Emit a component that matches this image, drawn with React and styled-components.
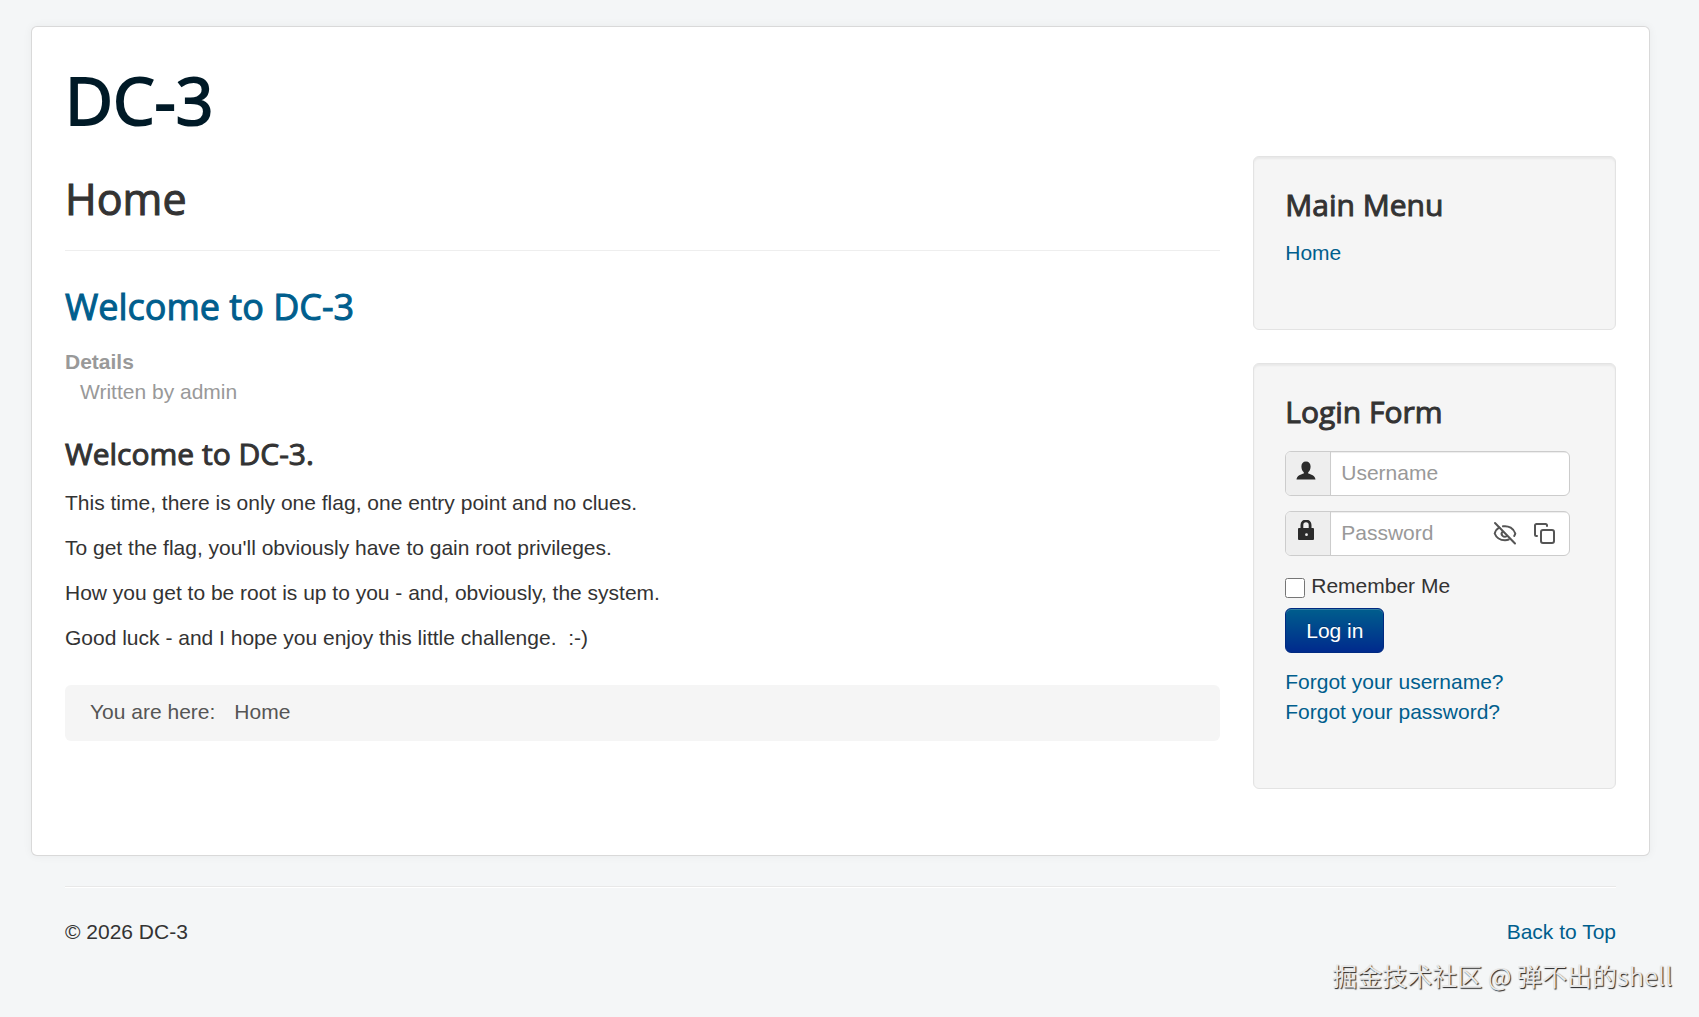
import React from 'react'
import styled, { createGlobalStyle } from 'styled-components';

const GlobalStyle = createGlobalStyle`
* {
box-sizing: border-box;
}
body {
margin: 0;
background: #f4f6f7;
color: #333;
font-family: "Liberation Sans", Arial, sans-serif;
font-size: 21px;
line-height: 30px;
}
`

const Page = styled.div`
padding: 26px 49px 0 31px;
`

const Card = styled.div`
background: #fff;
border: 1px solid rgba(0, 0, 0, 0.15);
border-radius: 6px;
box-shadow: 0 0 10px rgba(0, 0, 0, 0.05);
padding: 30px 33px 66px;
`

const Brand = styled.a`
display: block;
margin-bottom: 15px;
color: #001a27;
font-family: "Open Sans", sans-serif;
font-size: 66px;
line-height: 84px;
-webkit-text-stroke: 2px;
text-decoration: none;
`

const Columns = styled.div`
display: grid;
grid-template-columns: minmax(0, 1156fr) minmax(0, 363fr);
gap: 33px;
align-items: start;
`

const Side = styled.aside`
display: grid;
gap: 33px;
`

const Well = styled.section`
min-height: 174px;
padding: 30px 31px 61px;
background: #f5f5f5;
border: 1px solid #e3e3e3;
border-radius: 6px;
box-shadow: inset 0 2px 2px rgba(0, 0, 0, 0.05);
`

const Heading = styled.h3`
margin: 0;
font-family: "Open Sans", sans-serif;
font-size: 30px;
font-weight: 400;
line-height: 36px;
-webkit-text-stroke: 1px;
`

const WellHeading = styled(Heading)`
margin-bottom: 15px;
`

const PageHeader = styled.div`
padding: 18px 0 26px;
margin-bottom: 33px;
border-bottom: 1px solid #eee;
`

const PageTitle = styled(Heading)`
font-size: 43px;
line-height: 50px;
`

const ArticleTitle = styled(Heading)`
margin-bottom: 17px;
font-size: 36px;
line-height: 46px;
`

const Link = styled.a`
color: #005e8d;
text-decoration: none;
`

const Info = styled.dl`
margin: 0 0 29px;
color: #999;
`

const Term = styled.dt`
font-weight: bold;
`

const Detail = styled.dd`
margin: 0 0 0 15px;
`

const ArticleHeading = styled(Heading)`
margin-bottom: 16px;
`

const Text = styled.p`
margin: 0 0 15px;
`

const Breadcrumb = styled.nav`
display: flex;
gap: 19px;
margin-top: 32px;
padding: 12px 25px 14px;
background: #f5f5f5;
border-radius: 6px;
color: #555;
`

const LoginFields = styled.form`
padding-top: 6px;
`

const Field = styled.label`
display: flex;
position: relative;
max-width: 285px;
height: 45px;
margin-bottom: 15px;
border: 1px solid #ccc;
border-radius: 6px;
background: #fff;
overflow: hidden;
`

const AddOn = styled.span`
flex: none;
width: 45px;
padding: 8px 10px;
background: #eee;
border-right: 1px solid #ccc;
color: #2b2b2b;
svg {
display: block;
}
`

const Input = styled.input`
flex: 1;
min-width: 0;
padding: 0 10px 2px;
border: 0;
outline: 0;
background: transparent;
box-shadow: inset 0 1px 1px rgba(0, 0, 0, 0.075);
color: #555;
font: inherit;
&::placeholder {
color: #999;
opacity: 1;
}
`

const FieldTools = styled.span`
position: absolute;
top: 9px;
right: 13px;
display: flex;
gap: 15px;
`

const ToolButton = styled.button`
display: block;
padding: 0;
border: 0;
background: none;
color: #555;
line-height: 0;
`

const Remember = styled.label`
display: flex;
gap: 6px;
align-items: flex-start;
`

const Checkbox = styled.input`
width: 20px;
height: 20px;
margin: 7px 0 0;
`

const LoginButton = styled.button`
display: block;
height: 45px;
margin: 7px 0 14px;
padding: 0 20px;
border: 1px solid #002a80;
border-radius: 6px;
background: linear-gradient(#005e8d, #002a8d);
box-shadow: inset 0 1px 0 rgba(255, 255, 255, 0.2);
color: #fff;
font: inherit;
text-shadow: 0 -1px 0 rgba(0, 0, 0, 0.25);
`

const LinkList = styled.ul`
margin: 0;
padding: 0;
list-style: none;
`

const Footer = styled.footer`
display: flex;
justify-content: space-between;
margin: 30px 34px 0;
padding: 30px 0;
border-top: 1px solid #e8e8e8;
box-shadow: inset 0 1px 0 #fff;
`

const Watermark = styled.div`
position: absolute;
right: 27px;
bottom: 24px;
color: #e8e8e8;
font-family: "Noto Sans CJK SC", sans-serif;
font-size: 25px;
line-height: 36px;
text-shadow: 1px 1px 1px #222;
`

const UserIcon = () => (
    <svg width="20" height="22" viewBox="0 0 20 22" fill="currentColor" aria-hidden="true">
        <path d="M10 1.500c3 0 4.600 2 4.600 5 0 2.600-1 4.600-2.400 5.700v1.200c2.500.8 7 1.800 7.300 6.100H.5c.3-4.300 4.800-5.300 7.300-6.100v-1.200C6.400 11.100 5.400 9.100 5.400 6.500c0-3 1.600-5 4.600-5z" />
    </svg>
)

const LockIcon = () => (
    <svg width="20" height="22" viewBox="0 0 20 22" fill="currentColor" aria-hidden="true">
        <path fillRule="evenodd" d="M4.500 8V5a5.500 5.500 0 0 1 11 0v3H17a1 1 0 0 1 1 1v10a1 1 0 0 1-1 1H3a1 1 0 0 1-1-1V9a1 1 0 0 1 1-1zM7.300 8h5.400V5a2.700 2.700 0 0 0-5.400 0zM10.500 13.300a1.400 1.400 0 1 0 0 2.800 1.400 1.400 0 0 0 0-2.800z" />
    </svg>
)

const EyeOffIcon = () => (
    <svg width="24" height="24" viewBox="0 0 24 24" fill="none" stroke="currentColor" strokeWidth="2" strokeLinecap="round" strokeLinejoin="round" aria-hidden="true">
        <path d="M2 2l20 20.500" />
        <path d="M6.300 6.500C3.800 8 2.300 10 1.700 12.500c1.600 4.200 5.600 6.700 10.300 6.700 1.400 0 2.600-.2 3.800-.7" />
        <path d="M10 5.300c5.800-.9 10.600 2.200 12.300 7.200-.2.900-.6 1.700-1.100 2.500" />
        <path d="M9.600 10.600a3 3 0 1 0 4.300 4.300" />
    </svg>
)

const CopyIcon = () => (
    <svg width="24" height="24" viewBox="0 0 24 24" fill="none" stroke="currentColor" strokeWidth="2" strokeLinecap="round" strokeLinejoin="round" aria-hidden="true">
        <rect x="9" y="9" width="13" height="13" rx="2" />
        <path d="M5 15H4.500A1.500 1.500 0 0 1 3 13.500V4.500A1.500 1.500 0 0 1 4.500 3h9A1.500 1.500 0 0 1 15 4.500V5" />
    </svg>
)

const App = () => {
    return (
        <>
        <GlobalStyle />
        <Page id="top">
            <Card>
                <Brand href="#">DC-3</Brand>
                <Columns>
                    <main>
                        <PageHeader>
                            <PageTitle as="h1">Home</PageTitle>
                        </PageHeader>
                        <ArticleTitle as="h2"><Link href="#">Welcome to DC-3</Link></ArticleTitle>
                        <Info>
                            <Term>Details</Term>
                            <Detail>Written by admin</Detail>
                        </Info>
                        <ArticleHeading>Welcome to DC-3.</ArticleHeading>
                        <Text>This time, there is only one flag, one entry point and no clues.</Text>
                        <Text>To get the flag, you'll obviously have to gain root privileges.</Text>
                        <Text>How you get to be root is up to you - and, obviously, the system.</Text>
                        <Text>Good luck - and I hope you enjoy this little challenge.&nbsp; :-)</Text>
                        <Breadcrumb aria-label="Breadcrumbs">
                            <span>You are here:</span>
                            <span>Home</span>
                        </Breadcrumb>
                    </main>
                    <Side>
                        <Well>
                            <WellHeading>Main Menu</WellHeading>
                            <LinkList>
                                <li><Link href="#">Home</Link></li>
                            </LinkList>
                        </Well>
                        <Well>
                            <WellHeading>Login Form</WellHeading>
                            <LoginFields>
                                <Field>
                                    <AddOn><UserIcon /></AddOn>
                                    <Input type="text" placeholder="Username" aria-label="Username" />
                                </Field>
                                <Field>
                                    <AddOn><LockIcon /></AddOn>
                                    <Input type="password" placeholder="Password" aria-label="Password" />
                                    <FieldTools>
                                        <ToolButton type="button" aria-label="Show password"><EyeOffIcon /></ToolButton>
                                        <ToolButton type="button" aria-label="Copy password"><CopyIcon /></ToolButton>
                                    </FieldTools>
                                </Field>
                                <Remember>
                                    <Checkbox type="checkbox" />
                                    Remember Me
                                </Remember>
                                <LoginButton type="button">Log in</LoginButton>
                                <LinkList>
                                    <li><Link href="#">Forgot your username?</Link></li>
                                    <li><Link href="#">Forgot your password?</Link></li>
                                </LinkList>
                            </LoginFields>
                        </Well>
                    </Side>
                </Columns>
            </Card>
            <Footer>
                <span>© 2026 DC-3</span>
                <Link href="#top">Back to Top</Link>
            </Footer>
        </Page>
        <Watermark>掘金技术社区 @ 弹不出的shell</Watermark>
        </>
    )
}

export default App
